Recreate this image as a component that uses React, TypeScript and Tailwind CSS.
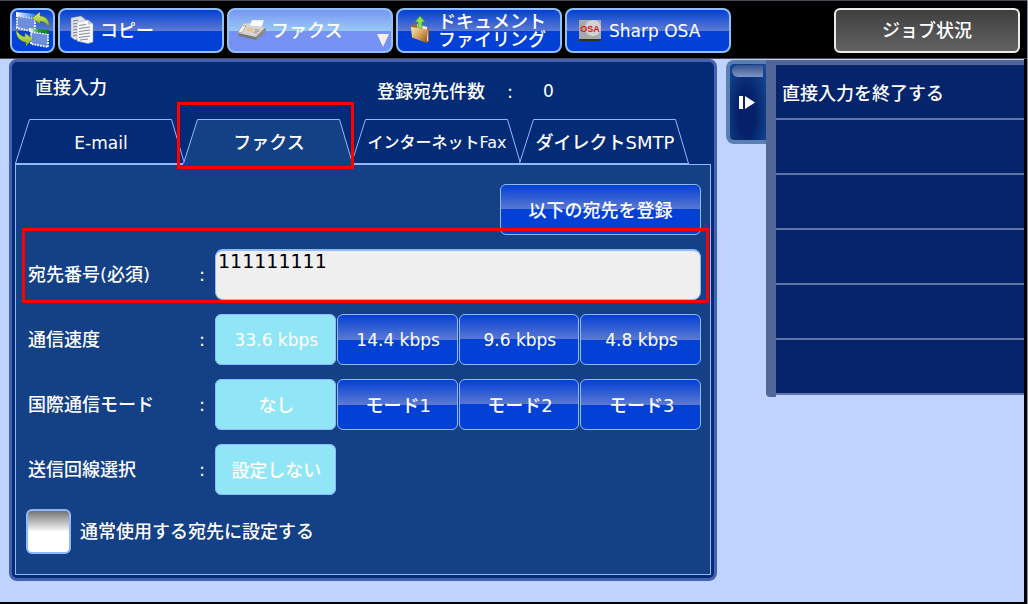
import { useState } from "react";
import type { ReactNode } from "react";
import clsx from "clsx";

const glossy =
    "bg-[linear-gradient(180deg,#0440d4_0%,#5b79d3_50%,#0340d6_50%,#0340d6_100%)]";

function SwapIcon() {
    return (
        <svg width="36" height="36" viewBox="0 0 36 36" aria-hidden="true">
            <defs>
                <linearGradient id="leaf" x1="0" y1="0" x2="0" y2="1">
                    <stop offset="0" stopColor="#e4f47c" />
                    <stop offset="1" stopColor="#7fae1c" />
                </linearGradient>
                <linearGradient id="barBlue" x1="0" y1="0" x2="1" y2="0">
                    <stop offset="0" stopColor="#ffffff" />
                    <stop offset="1" stopColor="#2b7be0" />
                </linearGradient>
                <linearGradient id="barGreen" x1="0" y1="0" x2="1" y2="0">
                    <stop offset="0" stopColor="#ffffff" />
                    <stop offset="0.5" stopColor="#1c9a2c" />
                    <stop offset="1" stopColor="#0c7a1c" />
                </linearGradient>
            </defs>
            <path d="M2 4 20 6V20L2 16Z" fill="#6d8fdc" stroke="#fff" strokeWidth="1.8" strokeDasharray="1.8 1" />
            <path d="M1 0 20 2V6L1 4Z" fill="url(#barBlue)" />
            <path d="M16 20 33 22V35L16 32Z" fill="#6d8fdc" stroke="#fff" strokeWidth="1.8" strokeDasharray="1.8 1" />
            <path d="M14 16 34 18V22L14 19Z" fill="url(#barGreen)" />
            <path d="M17 6 25 0V4C31 4 35 9 34 15C31 11 29 9.5 25 9.5V12Z" fill="url(#leaf)" stroke="#4d7414" strokeWidth="0.5" />
            <path d="M18 27 11 34V30.5C4 29 1 24 1 18C4 22 6 24.5 10 24.5V21Z" fill="url(#leaf)" stroke="#4d7414" strokeWidth="0.5" />
        </svg>
    );
}

function CopyIcon() {
    return (
        <svg width="24" height="30" viewBox="0 0 24 30" aria-hidden="true">
            <path d="M1 3 11 1 16 5V22L5 25 1 22Z" fill="#dfe3ea" stroke="#8a93a6" strokeWidth="0.5" />
            <path d="M3 6 8 5M3 9 8 8M3 12 8 11M3 15 8 14M3 18 8 17M3 21 7 20" stroke="#767d8c" strokeWidth="1" />
            <path d="M7 7 18 5 23 9V27L18 28.5 7 26Z" fill="#f6f7f8" stroke="#9aa2b2" strokeWidth="0.5" />
            <path d="M18 5V9.5L23 9Z" fill="#c4cad4" />
            <path d="M9 10.5 16 9.5M9 13.5 20 12M9 16.5 20 15M9 19.5 20 18M9 22.5 20 21M10 25 18 24" stroke="#858c98" strokeWidth="1" />
        </svg>
    );
}

function FaxIcon() {
    return (
        <svg width="30" height="22" viewBox="0 0 30 22" aria-hidden="true">
            <path d="M1 14 6 5 25 8 29 10 28 14 19 21 2 17Z" fill="#77787c" />
            <path d="M6 5 13 4 28 9 19 18 1 14Z" fill="#d9d6d2" />
            <path d="M15 1 27 1 25 8 12 7Z" fill="#fbfbfb" stroke="#b5b9c0" strokeWidth="0.5" />
            <path d="M19 18 28 9V14L19 21Z" fill="#8a8a8c" />
            <path d="M5 6.5 9 7 5 14 1 13.5Z" fill="#f3f1ee" stroke="#8d8d90" strokeWidth="0.6" />
            <path d="M11 8.5 17 9.5 15 13 9.5 12Z" fill="#e6c391" />
            <path d="M18 10.5 23 11.2M17.3 12 21.8 12.7M16.5 13.6 20.5 14.2" stroke="#97969a" strokeWidth="0.9" />
        </svg>
    );
}

function FilingIcon() {
    return (
        <svg width="20" height="28" viewBox="0 0 20 28" aria-hidden="true">
            <defs>
                <linearGradient id="folder" x1="0" y1="0" x2="1" y2="1">
                    <stop offset="0" stopColor="#fbe7b9" />
                    <stop offset="0.5" stopColor="#d9a45c" />
                    <stop offset="1" stopColor="#8a5420" />
                </linearGradient>
            </defs>
            <path d="M1 9 8 8 10 10 19 12 19 25 17 27 2 21Z" fill="#a9692b" />
            <path d="M7 8 17 11 18 25 7 21Z" fill="#f4efe2" />
            <path d="M10 0 15 6H12V13L8 12V6H5Z" fill="#8fe05a" stroke="#3f9a1f" strokeWidth="0.7" />
            <path d="M1 11 17 13.5V27L2 21.5Z" fill="url(#folder)" />
        </svg>
    );
}

function OsaIcon() {
    return (
        <svg width="22" height="21" viewBox="0 0 22 21" aria-hidden="true">
            <rect width="22" height="21" fill="#a9a9ab" />
            <circle cx="14" cy="8" r="8" fill="#d2d2d4" />
            <text x="11" y="12" textAnchor="middle" fontSize="9" fontWeight="700" fontFamily="Liberation Sans, sans-serif" fill="#d8141c">
                OSA
            </text>
            <rect y="19" width="22" height="2" fill="#303033" />
        </svg>
    );
}

type ModeButtonProps = {
    icon: ReactNode;
    active?: boolean;
    spacing: string;
    children: ReactNode;
};

function ModeButton({ icon, active, spacing, children }: ModeButtonProps) {
    return (
        <button
            type="button"
            className={clsx(
                "relative h-[45px] min-w-0 flex-1 rounded-lg border-2 border-[#8fc0f8] text-left text-lg leading-[18px]",
                active
                    ? "bg-[linear-gradient(180deg,#7797f2_0%,#98c8f6_50%,#7591f3_50%,#7591f3_100%)]"
                    : glossy
            )}
        >
            <span className={clsx("flex items-center", spacing)}>
                {icon}
                <span className="pt-0.5">{children}</span>
            </span>
            {active && (
                <svg className="absolute right-0.5 bottom-1" width="12" height="13" viewBox="0 0 12 13" aria-hidden="true">
                    <path d="M0 0H12L6 13Z" fill="#f3f1e6" />
                </svg>
            )}
        </button>
    );
}

const tabs = [
    { name: "E-mail", size: "text-[17px]" },
    { name: "ファクス", size: "text-lg" },
    { name: "インターネットFax", size: "text-base" },
    { name: "ダイレクトSMTP", size: "text-lg" },
];

function Tab({ name, size, active }: { name: string; size: string; active: boolean }) {
    return (
        <button
            type="button"
            role="tab"
            aria-selected={active}
            className={clsx(
                "relative -mr-0.5 h-[46px] w-[170px] pt-0.5 pl-0.5 whitespace-nowrap",
                size,
                active && "z-10"
            )}
        >
            <svg className="absolute inset-0 h-full w-full" viewBox="0 0 170 46" preserveAspectRatio="none" aria-hidden="true">
                <path
                    d={active ? "M0 46V44L14.5 0.5H156.5L170 44V46" : "M0.5 44.5 14.5 0.5H156.5L169.5 44.5Z"}
                    fill={active ? "#144086" : "#042b75"}
                />
                <path d="M0.5 44.5 14.5 0.5H156.5L169.5 44.5" fill="none" stroke="#8fb8ff" />
                {!active && <path d="M0 45H170" stroke="#8fb8ff" strokeWidth="2" />}
            </svg>
            <span className="relative">{name}</span>
            {active && <span className="absolute -top-[17px] -right-px -bottom-1 -left-1.5 border-[3px] border-[#ff0000]" />}
        </button>
    );
}

function Row({ label, children }: { label: ReactNode; children: ReactNode }) {
    return (
        <div className="flex items-center">
            <div className="flex w-[189px] shrink-0 justify-between pr-2.5 pl-0.5">
                {label}
                <span>:</span>
            </div>
            <div className="min-w-0 flex-1">{children}</div>
        </div>
    );
}

function Options({ label, items }: { label: string; items: string[] }) {
    const [selected, setSelected] = useState(items[0]);
    return (
        <Row label={<span>{label}</span>}>
            <div role="group" aria-label={label} className="grid grid-cols-4 gap-px">
                {items.map((item) => (
                    <button
                        key={item}
                        type="button"
                        aria-pressed={item === selected}
                        onClick={() => setSelected(item)}
                        className={clsx(
                            "h-[51px] rounded-md border border-[#8fb8ff] pt-0.5 pl-0.5",
                            item.includes("kbps") ? "text-[17px]" : "text-lg",
                            item === selected ? "bg-[#90e6f6]" : glossy
                        )}
                    >
                        {item}
                    </button>
                ))}
            </div>
        </Row>
    );
}

export default function App() {
    const [number, setNumber] = useState("111111111");

    return (
        <div className="flex min-h-screen flex-col border-r border-[#8d90a4] bg-black pb-0.5 font-['DejaVu_Sans','Noto_Sans_CJK_JP',sans-serif] text-lg font-medium text-white">
            <header className="flex h-[59px] items-center border-y border-[#4c4c58] pt-px pr-[7px] pl-2.5">
                <nav className="flex flex-1 gap-[3px]">
                    <button
                        type="button"
                        aria-label="切り替え"
                        className={clsx("flex h-[45px] w-[45px] items-center justify-center rounded-lg border-2 border-[#8fc0f8]", glossy)}
                    >
                        <SwapIcon />
                    </button>
                    <ModeButton icon={<CopyIcon />} spacing="gap-1.5 pl-2.5">
                        コピー
                    </ModeButton>
                    <ModeButton icon={<FaxIcon />} active spacing="gap-1 pl-2">
                        ファクス
                    </ModeButton>
                    <ModeButton icon={<FilingIcon />} spacing="gap-2 pl-3">
                        <span className="block">ドキュメント</span>
                        <span className="block">ファイリング</span>
                    </ModeButton>
                    <ModeButton icon={<OsaIcon />} spacing="gap-2 pl-3">
                        <span className="text-[17px]">Sharp OSA</span>
                    </ModeButton>
                </nav>
                <button
                    type="button"
                    className="ml-[103px] h-[45px] w-[186px] rounded-md border-2 border-[#ececec] bg-linear-to-b from-[#404040] to-[#626262] pt-0.5 text-lg"
                >
                    ジョブ状況
                </button>
            </header>

            <div className="mr-[3px] flex flex-1 items-start gap-[9px] bg-[#c0d3ff] pl-[9px]">
                <main className="flex-1 rounded-lg border-[3px] border-[#4560b0] bg-[#042b75] px-[3px] pb-[3px]">
                    <div className="flex h-[57px] items-start pt-3 pl-5">
                        <h1 className="w-[342px]">直接入力</h1>
                        <dl className="flex pt-1">
                            <dt className="w-[130px]">登録宛先件数</dt>
                            <dd className="flex gap-[30px]">
                                <span>:</span>
                                <span className="text-[17px]">0</span>
                            </dd>
                        </dl>
                    </div>

                    <div role="tablist" className="flex">
                        {tabs.map((tab) => (
                            <Tab key={tab.name} {...tab} active={tab.name === "ファクス"} />
                        ))}
                    </div>

                    <section className="-mt-px flex flex-col gap-3.5 border border-[#8fb8ff] bg-[#144086] pt-[19px] pr-[9px] pb-5 pl-2.5">
                        <button
                            type="button"
                            className={clsx("h-[51px] w-[201px] self-end rounded-md border border-[#8fb8ff] pt-0.5", glossy)}
                        >
                            以下の宛先を登録
                        </button>

                        <div className="relative">
                            <Row label={<label htmlFor="number">宛先番号(必須)</label>}>
                                <textarea
                                    id="number"
                                    value={number}
                                    onChange={(e) => setNumber(e.target.value)}
                                    className="block h-[51px] w-full resize-none overflow-hidden rounded-lg border border-t-2 border-[#8fb8ff] bg-[#efefef] px-0.5 text-[19px] leading-5 text-black outline-none"
                                />
                            </Row>
                            <span className="pointer-events-none absolute -top-[21px] -right-2 -bottom-[3px] -left-1 border-[3px] border-[#ff0000]" />
                        </div>

                        <Options label="通信速度" items={["33.6 kbps", "14.4 kbps", "9.6 kbps", "4.8 kbps"]} />
                        <Options label="国際通信モード" items={["なし", "モード1", "モード2", "モード3"]} />
                        <Options label="送信回線選択" items={["設定しない"]} />

                        <label className="flex items-center gap-[9px]">
                            <input
                                type="checkbox"
                                className="h-[45px] w-[45px] appearance-none rounded-md border-2 border-[#8fb8ff] bg-[linear-gradient(180deg,#747474_0%,#ececec_45%,#ffffff_50%)] checked:bg-[#90e6f6]"
                            />
                            通常使用する宛先に設定する
                        </label>
                    </section>
                </main>

                <aside className="flex w-[298px] items-start pt-px">
                    <button
                        type="button"
                        aria-label="閉じる"
                        className="flex h-[84px] w-10 flex-col rounded-l-lg border-4 border-r-0 border-[#5a80b2] bg-[radial-gradient(ellipse_at_45%_65%,#06206a_30%,#14519a_100%)]"
                    >
                        <span className="mt-px ml-0.5 h-3 w-[31px] rounded-l-md bg-linear-to-b from-[#34508e] to-[#8196c4]" />
                        <svg className="mt-[19px] ml-[9px]" width="16" height="14" viewBox="0 0 16 14" aria-hidden="true">
                            <path d="M0 0H4V13H0ZM6 0 16 6.5 6 13Z" fill="#fff" />
                        </svg>
                    </button>
                    <div className="flex flex-1">
                        <div className="-mb-0.5 w-2.5 rounded-bl-sm bg-[#52669a]" />
                        <ul className="flex-1 border-t-[5px] border-[#52669a] bg-[#06246c]">
                            {["直接入力を終了する", "", "", "", "", ""].map((item, i) => (
                                <li key={i} className="flex h-[55px] items-center border-b-2 border-[#6074a8] pt-1 pl-1.5">
                                    {item && <button type="button">{item}</button>}
                                </li>
                            ))}
                        </ul>
                    </div>
                </aside>
            </div>
        </div>
    );
}
